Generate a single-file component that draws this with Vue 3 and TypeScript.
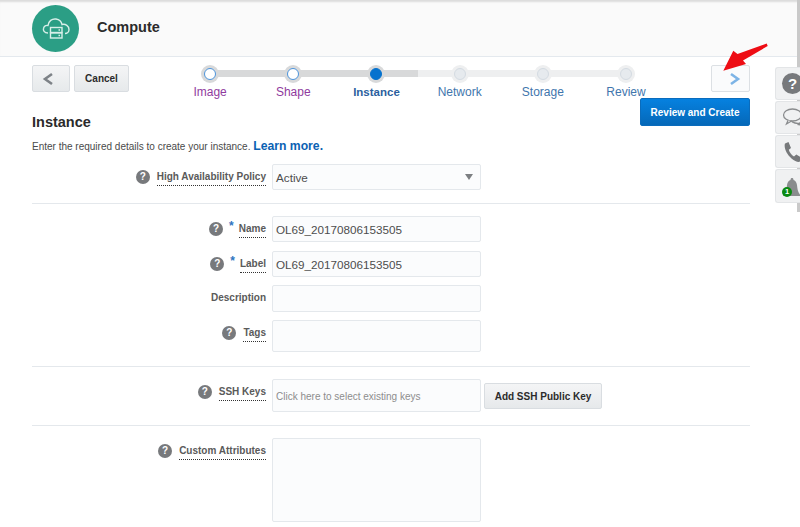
<script setup lang="ts">
interface Step { name: string; state: 'done' | 'active' | 'todo' }
const steps: Step[] = [
  { name: 'Image', state: 'done' },
  { name: 'Shape', state: 'done' },
  { name: 'Instance', state: 'active' },
  { name: 'Network', state: 'todo' },
  { name: 'Storage', state: 'todo' },
  { name: 'Review', state: 'todo' },
]
</script>

<template>
  <div class="page">
    <header class="head">
      <div class="logo">
        <svg width="30" height="30" viewBox="0 0 30 30" fill="none" stroke="#d8efe9" stroke-width="1.4">
          <path d="M7 19 C3 19 2 16 2.500 14.500 C3 12 5 11 7 11.500 C7.500 7 11 4.500 15 5 C18.500 5.500 20.500 8 21 10.500 C24.500 9.500 28 12 28 15.500 C28 18 26 19.500 24 19.500" />
          <rect x="9.500" y="13.500" width="11.500" height="5" fill="#2b9e85" />
          <rect x="9.500" y="19" width="11.500" height="5" fill="#2b9e85" />
          <path d="M17.500 16h1.500M17.500 21.500h1.500" />
        </svg>
      </div>
      <h1 class="title">Compute</h1>
    </header>

    <main class="main">
      <div class="toolbar">
        <button class="btn back" aria-label="Back">
          <svg width="12" height="14" viewBox="0 0 12 14" fill="none" stroke="#7d8287" stroke-width="2.600"><path d="M10 2 3 7l7 5" /></svg>
        </button>
        <button class="btn cancel">Cancel</button>
        <ol class="stepper">
          <li v-for="s in steps" :key="s.name" class="step" :class="s.state">
            <span class="dot"><span class="core"></span></span>
            <span class="step-name">{{ s.name }}</span>
          </li>
        </ol>
        <button class="btn next" aria-label="Next">
          <svg width="12" height="14" viewBox="0 0 12 14" fill="none" stroke="#7db4e6" stroke-width="2.600"><path d="M2 2l7 5-7 5" /></svg>
        </button>
      </div>

      <div class="section-head">
        <h2 class="section-title">Instance</h2>
        <button class="primary">Review and Create</button>
      </div>
      <p class="intro">Enter the required details to create your instance. <a class="learn">Learn more.</a></p>

      <div class="row row-policy">
        <div class="lab"><span class="help">?</span><span class="dotted">High Availability Policy</span></div>
        <div class="field select h26">Active<span class="caret"></span></div>
      </div>
      <hr class="rule rule-a" />

      <div class="row">
        <div class="lab"><span class="help">?</span><span class="star">*</span><span class="dotted">Name</span></div>
        <div class="field h26">OL69_20170806153505</div>
      </div>
      <div class="row gap9">
        <div class="lab"><span class="help">?</span><span class="star">*</span><span class="dotted">Label</span></div>
        <div class="field h26">OL69_20170806153505</div>
      </div>
      <div class="row gap8">
        <div class="lab"><span class="plain">Description</span></div>
        <div class="field h27"></div>
      </div>
      <div class="row gap8">
        <div class="lab"><span class="help">?</span><span class="dotted">Tags</span></div>
        <div class="field h32"></div>
      </div>
      <hr class="rule rule-b" />

      <div class="row">
        <div class="lab"><span class="help">?</span><span class="dotted">SSH Keys</span></div>
        <div class="field h33 ph">Click here to select existing keys</div>
        <button class="btn add">Add SSH Public Key</button>
      </div>
      <hr class="rule rule-c" />

      <div class="row">
        <div class="lab"><span class="help">?</span><span class="dotted">Custom Attributes</span></div>
        <div class="field h83"></div>
      </div>
    </main>

    <div class="scroll"></div>

    <aside class="rail">
      <div class="tab">
        <span class="rail-q">?</span>
      </div>
      <div class="tab">
        <svg class="ico" width="25" height="24" viewBox="0 0 25 24" fill="#f0f1f2" stroke="#8a8c8e" stroke-width="1.300">
          <ellipse cx="17" cy="12" rx="8" ry="5.500" />
          <path d="M16 19l5 1-2-4" fill="#8a8c8e" stroke="none" />
          <ellipse cx="11.500" cy="9" rx="9" ry="6" />
          <path d="M7 14.500 5.500 18l5-3" />
        </svg>
      </div>
      <div class="tab">
        <svg class="ico" width="25" height="24" viewBox="0 0 25 24" fill="#77797b">
          <path d="M4 3.500 7.500 2 10 8 7.800 9.800C8.500 12.500 10.500 15 13 16.500L15.300 14.500 21 18 19 21.500C17.500 22.500 14 21.500 10.500 18.500 6 14.500 2.500 8 4 3.500Z" />
        </svg>
      </div>
      <div class="tab tab-last">
        <svg class="ico" width="25" height="26" viewBox="0 0 25 26" fill="#8a8c8e">
          <path d="M2 22C5.500 18 5.500 15 6 11 6.400 8 8 6.500 9.500 6 9.500 4.500 10.200 4 11 4S12.500 4.500 12.500 6C14 6.500 15.600 8 16 11 16.500 15 16.500 18 20 22Z" />
        </svg>
        <span class="badge">1</span>
      </div>
    </aside>

    <svg class="pointer" width="50" height="32" viewBox="0 0 50 32" fill="#ee0d14">
      <path d="M1.300 27.700 11.300 7.700 15.500 11 44.700 .5 45.700 3 21 17.500 24 21Z" />
    </svg>
  </div>
</template>

<style>
html, body { margin: 0; background: #fff; overflow: hidden; }
</style>

<style scoped>
.page {
  position: relative;
  width: 800px;
  height: 527px;
  overflow: hidden;
  font-family: "Liberation Sans", Arial, sans-serif;
  color: #333;
  background: #fff;
}
.head {
  height: 57px;
  box-sizing: border-box;
  display: flex;
  align-items: center;
  padding: 1px 0 0 32px;
  background: #fafafa;
  border-bottom: 1px solid #e4e9ee;
  box-shadow: inset 0 3px 2px -1px #dcdcdc;
}
.logo {
  width: 47px;
  height: 47px;
  border-radius: 50%;
  background: #2b9e85;
  display: flex;
  align-items: center;
  justify-content: center;
}
.title {
  margin: 0 0 3px 18px;
  font-size: 14.500px;
  font-weight: 700;
  color: #2b2b2b;
}
.main { width: 718px; margin-left: 32px; }
.toolbar {
  display: flex;
  align-items: flex-start;
  padding-top: 8px;
  height: 40px;
  box-sizing: border-box;
}
.btn {
  box-sizing: border-box;
  font-family: inherit;
  border: 1px solid #d9dde1;
  border-radius: 2px;
  background: linear-gradient(#f4f5f6, #e6e9eb);
  color: #2b2b2b;
  font-weight: 700;
  font-size: 10px;
  display: flex;
  align-items: center;
  justify-content: center;
  padding: 0;
}
.back { width: 38px; height: 27px; padding-right: 7px; }
.cancel { width: 55px; height: 27px; margin-left: 4px; }
.next { width: 39px; height: 27px; margin-left: auto; padding-left: 8px; background: #fafbfc; border-color: #dce0e4; }
.stepper {
  list-style: none;
  margin: 0 0 0 39.500px;
  padding: 0;
  display: flex;
}
.step {
  position: relative;
  width: 83.200px;
  display: flex;
  flex-direction: column;
  align-items: center;
  font-size: 12px;
  line-height: 14px;
}
.step::before {
  content: "";
  position: absolute;
  left: 50%;
  top: 5px;
  width: 100%;
  height: 7px;
  background: #eeeff0;
}
.step.done::before { background: #d8d9da; }
.step:last-child::before { display: none; }
.dot {
  position: relative;
  width: 18px;
  height: 18px;
  box-sizing: border-box;
  border-radius: 50%;
  background: #d8d9da;
  display: flex;
  align-items: center;
  justify-content: center;
}
.core {
  width: 12px;
  height: 12px;
  box-sizing: border-box;
  border-radius: 50%;
  background: #fff;
  border: 1.500px solid #4d94db;
}
.active .core { background: #0572ce; border-color: #0572ce; }
.active::before { background: linear-gradient(90deg, #d8d9da 50%, #eeeff0 50%); }
.todo .dot { background: #eeeff0; }
.todo .core { background: #e6eaee; border: 1px solid #d4dbe2; }
.step-name { margin-top: 2px; color: #8f3b9e; }
.active .step-name { color: #2c5f9e; font-weight: 700; font-size: 11.500px; }
.todo .step-name { color: #3f76ad; }
.section-head {
  display: flex;
  justify-content: space-between;
  align-items: flex-end;
  height: 29px;
}
.section-title {
  margin: 0;
  font-size: 14.500px;
  line-height: 17px;
  font-weight: 700;
  color: #2b2b2b;
  position: relative;
  top: 5px;
}
.primary {
  width: 110px;
  height: 28px;
  padding: 0;
  border: 1px solid #0a6cbd;
  border-radius: 2px;
  background: linear-gradient(#0681e0, #0568b8);
  color: #fff;
  font-family: inherit;
  font-weight: 700;
  font-size: 10px;
}
.intro {
  margin: 12px 0 10px;
  height: 16px;
  line-height: 16px;
  font-size: 10px;
  color: #4a4a4a;
}
.learn { font-size: 12.200px; font-weight: 700; color: #0b62b3; }
.row { display: flex; align-items: flex-start; }
.gap9 { margin-top: 9px; }
.gap8 { margin-top: 8px; }
.lab {
  width: 234px;
  padding-top: 6px;
  display: flex;
  justify-content: flex-end;
  align-items: flex-start;
  font-size: 10px;
  line-height: 14px;
  font-weight: 700;
  color: #5a5a5a;
}
.dotted { border-bottom: 1px dotted #333; padding-bottom: 1px; }
.plain { display: block; }
.help {
  width: 14px;
  height: 14px;
  margin-right: 7px;
  border-radius: 50%;
  background: #77797c;
  color: #fff;
  font-size: 10px;
  line-height: 14px;
  text-align: center;
  flex: none;
}
.star {
  margin: -3px 5px 0 -1px;
  color: #2f74c0;
  font-size: 12px;
}
.field {
  box-sizing: border-box;
  width: 209px;
  margin-left: 6px;
  padding: 0 3px;
  display: flex;
  align-items: center;
  background: #fbfcfd;
  border: 1px solid #e4e8ec;
  border-radius: 2px;
  font-size: 11.700px;
  color: #4d4d4d;
}
.select { justify-content: space-between; padding-right: 7px; }
.caret {
  width: 0;
  height: 0;
  border-left: 4px solid transparent;
  border-right: 4px solid transparent;
  border-top: 6px solid #7c7f82;
}
.h26 { height: 26px; }
.h27 { height: 27px; }
.h32 { height: 32px; }
.h33 { height: 33px; }
.h83 { height: 84px; }
.ph { font-size: 10px; color: #8d8d8d; padding-top: 2px; }
.add { width: 118px; height: 26px; margin: 4px 0 0 3px; font-size: 10px; }
.rule { border: 0; height: 1px; background: #e4e8ec; margin: 0; }
.rule-a { margin: 13px 0 12px; }
.rule-b { margin: 14px 0 12px; }
.rule-c { margin: 13px 0 12px; }
.rail {
  position: absolute;
  left: 775px;
  top: 67px;
  width: 25px;
  display: flex;
  flex-direction: column;
  gap: 1px;
}
.tab {
  position: relative;
  height: 33px;
  box-sizing: border-box;
  display: flex;
  align-items: center;
  background: #f0f1f2;
  border: 1px solid #e3e5e7;
  border-right: 0;
  border-radius: 3px 0 0 3px;
  overflow: hidden;
}
.tab-last { height: 34px; }
.rail-q {
  position: absolute;
  left: 6px;
  top: 5px;
  width: 21px;
  height: 21px;
  border-radius: 50%;
  background: #77797c;
  color: #fff;
  font-weight: 700;
  font-size: 15px;
  line-height: 21px;
  text-align: center;
}
.ico { position: absolute; left: 5px; top: 4px; }
.badge {
  position: absolute;
  left: 6px;
  top: 17px;
  width: 10px;
  height: 10px;
  border-radius: 50%;
  background: #0a8a12;
  color: #fff;
  font-size: 7.500px;
  font-weight: 700;
  line-height: 10px;
  text-align: center;
}
.pointer { position: absolute; left: 722px; top: 43px; }
.scroll {
  position: absolute;
  right: 0;
  top: 0;
  width: 3px;
  height: 212px;
  background: #c9c9c9;
}
</style>
